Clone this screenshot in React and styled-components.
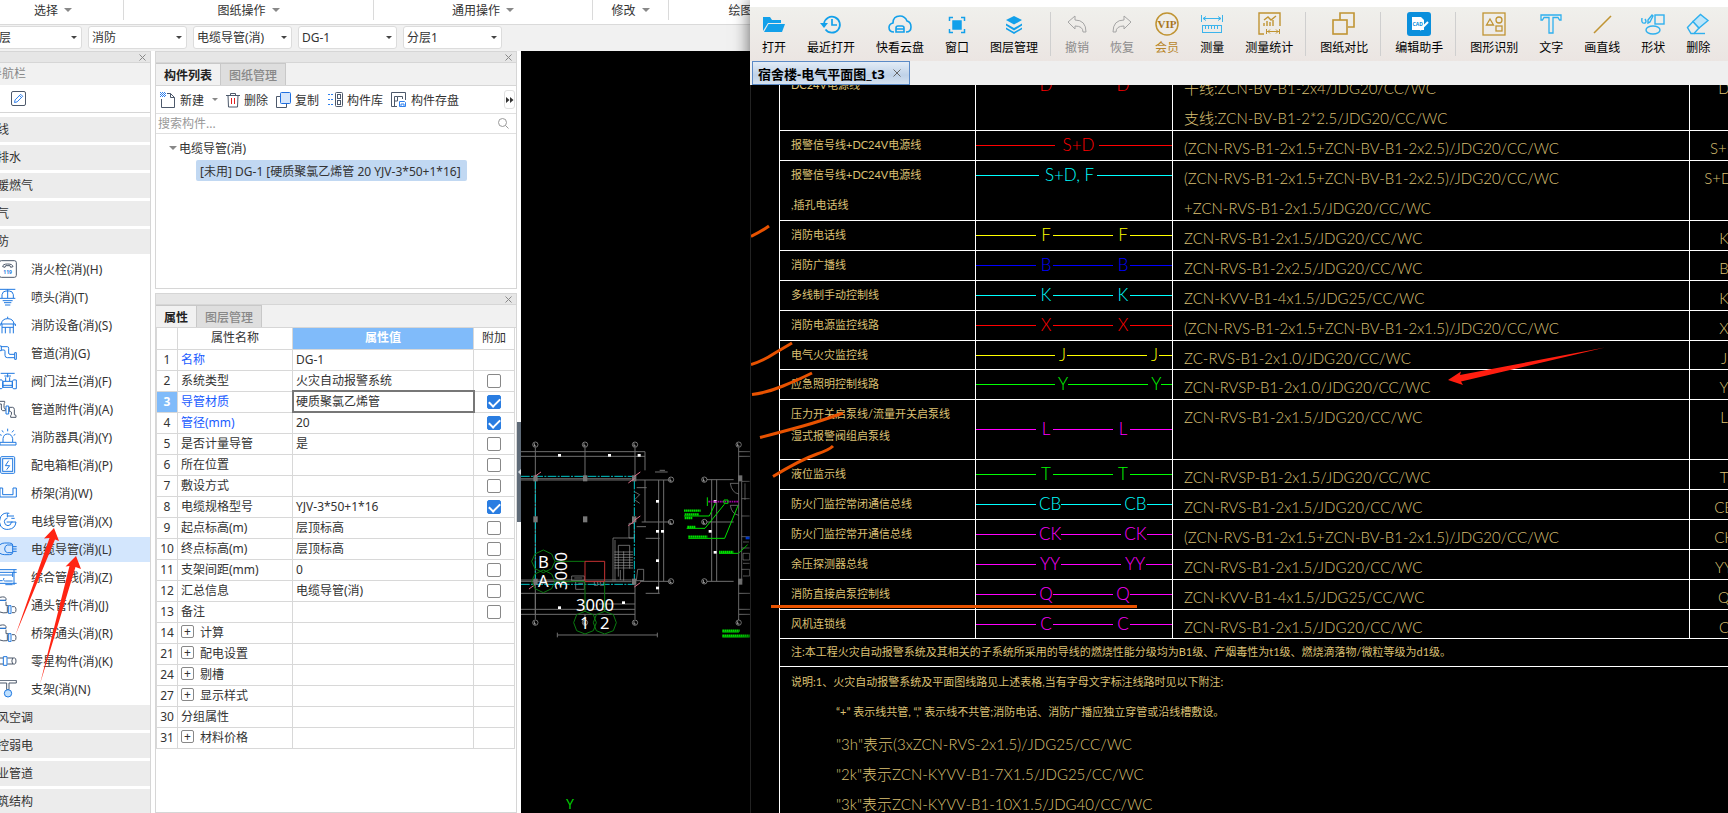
import React from 'react'
import styled, { createGlobalStyle, css } from 'styled-components'

const UI_FONT = `'Noto Sans', 'Noto Sans CJK SC', sans-serif`
const CAD_FONT = `'Lato', 'Noto Sans CJK SC', sans-serif`

const ribbonGroups = [
  { label: '选择', width: 141 },
  { label: '图纸操作', width: 250 },
  { label: '通用操作', width: 219 },
  { label: '修改', width: 76 },
  { label: '绘图', width: 158 },
]

const combos = ['首层', '消防', '电缆导管(消)', 'DG-1', '分层1']

const groupsBefore = ['轴线', '给排水', '采暖燃气', '电气', '消防']
const groupsAfter = ['通风空调', '智控弱电', '工业管道', '建筑结构']

const navItems = [
  { icon: 'hydrant', label: '消火栓(消)(H)' },
  { icon: 'sprinkler', label: '喷头(消)(T)' },
  { icon: 'device', label: '消防设备(消)(S)' },
  { icon: 'pipe', label: '管道(消)(G)' },
  { icon: 'valve', label: '阀门法兰(消)(F)' },
  { icon: 'fitting', label: '管道附件(消)(A)' },
  { icon: 'alarm', label: '消防器具(消)(Y)' },
  { icon: 'cabinet', label: '配电箱柜(消)(P)' },
  { icon: 'tray', label: '桥架(消)(W)' },
  { icon: 'wire', label: '电线导管(消)(X)' },
  { icon: 'cable', label: '电缆导管(消)(L)', active: true },
  { icon: 'bundle', label: '综合管线(消)(Z)' },
  { icon: 'elbow', label: '通头管件(消)(J)' },
  { icon: 'elbow', label: '桥架通头(消)(R)' },
  { icon: 'part', label: '零星构件(消)(K)' },
  { icon: 'bracket', label: '支架(消)(N)' },
]

const properties = [
  { id: 1, name: '名称', value: 'DG-1', key: true },
  { id: 2, name: '系统类型', value: '火灾自动报警系统', extra: false },
  { id: 3, name: '导管材质', value: '硬质聚氯乙烯管', extra: true, key: true, current: true },
  { id: 4, name: '管径(mm)', value: '20', extra: true, key: true },
  { id: 5, name: '是否计量导管', value: '是', extra: false },
  { id: 6, name: '所在位置', extra: false },
  { id: 7, name: '敷设方式', extra: false },
  { id: 8, name: '电缆规格型号', value: 'YJV-3*50+1*16', extra: true },
  { id: 9, name: '起点标高(m)', value: '层顶标高', extra: false },
  { id: 10, name: '终点标高(m)', value: '层顶标高', extra: false },
  { id: 11, name: '支架间距(mm)', value: '0', extra: false },
  { id: 12, name: '汇总信息', value: '电缆导管(消)', extra: false },
  { id: 13, name: '备注', extra: false },
  { id: 14, name: '计算', group: true },
  { id: 21, name: '配电设置', group: true },
  { id: 24, name: '剔槽', group: true },
  { id: 27, name: '显示样式', group: true },
  { id: 30, name: '分组属性' },
  { id: 31, name: '材料价格', group: true },
]

const RED = '#ff0000'
const CYAN = '#00ffff'
const YELLOW = '#ffff00'
const BLUE = '#0000ff'
const GREEN = '#00ff00'
const MAGENTA = '#ff00ff'

// lead: length of the first stroke, room: space kept for each letter mark
const cables = [
  { names: ['DC24V电源线'], mark: 'D', color: RED, bare: true, specs: ['干线:ZCN-BV-B1-2x4/JDG20/CC/WC', '支线:ZCN-BV-B1-2*2.5/JDG20/CC/WC'], code: 'D', height: 60 },
  { names: ['报警信号线+DC24V电源线'], mark: 'S+D', color: RED, lead: 79, room: 44, single: true, specs: ['(ZCN-RVS-B1-2x1.5+ZCN-BV-B1-2x2.5)/JDG20/CC/WC'], code: 'S+D' },
  { names: ['报警信号线+DC24V电源线', ',插孔电话线'], mark: 'S+D, F', color: CYAN, lead: 63, room: 58, single: true, specs: ['(ZCN-RVS-B1-2x1.5+ZCN-BV-B1-2x2.5)/JDG20/CC/WC', '+ZCN-RVS-B1-2x1.5/JDG20/CC/WC'], code: 'S+D,F', height: 60 },
  { names: ['消防电话线'], mark: 'F', color: YELLOW, specs: ['ZCN-RVS-B1-2x1.5/JDG20/CC/WC'], code: 'K' },
  { names: ['消防广播线'], mark: 'B', color: BLUE, specs: ['ZCN-RVS-B1-2x2.5/JDG20/CC/WC'], code: 'B' },
  { names: ['多线制手动控制线'], mark: 'K', color: CYAN, specs: ['ZCN-KVV-B1-4x1.5/JDG25/CC/WC'], code: 'K' },
  { names: ['消防电源监控线路'], mark: 'X', color: RED, specs: ['(ZCN-RVS-B1-2x1.5+ZCN-BV-B1-2x1.5)/JDG20/CC/WC'], code: 'X' },
  { names: ['电气火灾监控线'], mark: 'J', color: YELLOW, lead: 79, room: 12, mid: 80, specs: ['ZC-RVS-B1-2x1.0/JDG20/CC/WC'], code: 'J', height: 29 },
  { names: ['应急照明控制线路'], mark: 'Y', color: GREEN, lead: 79, room: 12, mid: 80, specs: ['ZCN-RVSP-B1-2x1.0/JDG20/CC/WC'], code: 'Y' },
  { names: ['压力开关启泵线/流量开关启泵线', '湿式报警阀组启泵线'], tight: true, mark: 'L', color: MAGENTA, specs: ['ZCN-RVS-B1-2x1.5/JDG20/CC/WC'], code: 'L', height: 60, middle: true },
  { names: ['液位监示线'], mark: 'T', color: GREEN, specs: ['ZCN-RVSP-B1-2x1.5/JDG20/CC/WC'], code: 'T' },
  { names: ['防火门监控常闭通信总线'], mark: 'CB', color: CYAN, room: 23, specs: ['ZCN-RVS-B1-2x1.5/JDG20/CC/WC'], code: 'CB' },
  { names: ['防火门监控常开通信总线'], mark: 'CK', color: MAGENTA, room: 23, specs: ['(ZCN-RVS-B1-2x1.5+ZCN-BV-B1-2x1.5)/JDG20/CC/WC'], code: 'CK' },
  { names: ['余压探测器总线'], mark: 'YY', color: MAGENTA, room: 25, specs: ['ZCN-RVS-B1-2x1.5/JDG20/CC/WC'], code: 'YY' },
  { names: ['消防直接启泵控制线'], mark: 'Q', color: MAGENTA, specs: ['ZCN-KVV-B1-4x1.5/JDG25/CC/WC'], code: 'Q' },
  { names: ['风机连锁线'], mark: 'C', color: MAGENTA, specs: ['ZCN-RVS-B1-2x1.5/JDG20/CC/WC'], code: 'C', height: 29 },
]

const cadTools = [
  { icon: 'open', label: '打开' },
  { icon: 'recent', label: '最近打开' },
  { icon: 'cloud', label: '快看云盘' },
  { icon: 'window', label: '窗口' },
  { icon: 'layers', label: '图层管理' },
  null,
  { icon: 'undo', label: '撤销', tone: '#8c8c8c' },
  { icon: 'redo', label: '恢复', tone: '#8c8c8c' },
  { icon: 'vip', label: '会员', tone: '#b8862b' },
  { icon: 'measure', label: '测量' },
  { icon: 'stats', label: '测量统计' },
  null,
  { icon: 'compare', label: '图纸对比' },
  null,
  { icon: 'helper', label: '编辑助手' },
  null,
  { icon: 'shapes', label: '图形识别' },
  { icon: 'text', label: '文字' },
  { icon: 'line', label: '画直线' },
  { icon: 'figure', label: '形状' },
  { icon: 'eraser', label: '删除' },
]

export default function App() {
  return (
    <>
      <GlobalStyle />
      <Desktop>
        <ModelWindow />
        <CadWindow />
      </Desktop>
    </>
  )
}

function ModelWindow() {
  return (
    <ModelFrame>
      <Ribbon>
        {ribbonGroups.map(({ label, width }) => (
          <RibbonButton key={label} $width={width}>
            {label}
            <Caret $size={4} />
          </RibbonButton>
        ))}
      </Ribbon>
      <ComboBar>
        {combos.map(text => (
          <Combo key={text}>
            <select aria-label={text} defaultValue={text}>
              <option>{text}</option>
            </select>
            <Caret $size={3} $dark />
          </Combo>
        ))}
      </ComboBar>
      <Workspace>
        <Navigator />
        <Middle>
          <ComponentPanel />
          <PropertyPanel />
        </Middle>
        <Gutter>
          <GutterHandle aria-label="收起">
            <svg width="4" height="8" viewBox="0 0 4 8">
              <path d="M4 1 1 4l3 3z" fill="#d8dde2" />
            </svg>
          </GutterHandle>
        </Gutter>
        <PlanView>
          <FloorPlan />
        </PlanView>
      </Workspace>
      <NavArrows viewBox="0 0 160 200" width="160" height="200">
        <path d="M54 28 59 41 55 39.500 15.500 135 49.500 38 44 38.500z" />
        <path d="M76 56 81 69 75.500 67 40 184 69.500 66 65.500 66.500z" />
      </NavArrows>
    </ModelFrame>
  )
}

function Navigator() {
  return (
    <NavPanel>
      <PanelBar>
        <CloseButton />
      </PanelBar>
      <NavTitle>导航栏</NavTitle>
      <NavTools>
        <IconButton aria-label="编辑">
          <svg width="15" height="15" viewBox="0 0 15 15" fill="none">
            <rect x=".5" y=".5" width="14" height="14" rx="1.500" stroke="#4d596b" />
            <path d="m3.500 11.500.6-2.600 5.600-5.600 2 2-5.600 5.600zM8.500 4.600l2 2" stroke="#2f80ed" />
          </svg>
        </IconButton>
      </NavTools>
      <NavList>
        {groupsBefore.map(name => (
          <NavGroup key={name}>{name}</NavGroup>
        ))}
        {navItems.map(({ icon, label, active }) => (
          <NavItem key={label} $active={active}>
            <NavIcon name={icon} />
            {label}
          </NavItem>
        ))}
        {groupsAfter.map(name => (
          <NavGroup key={name}>{name}</NavGroup>
        ))}
      </NavList>
    </NavPanel>
  )
}

function ComponentPanel() {
  return (
    <Panel>
      <PanelBar>
        <CloseButton />
      </PanelBar>
      <Tabs>
        <Tab $active>构件列表</Tab>
        <Tab>图纸管理</Tab>
      </Tabs>
      <Tools>
        <ToolButton>
          <svg width="16" height="16" viewBox="0 0 16 16" fill="none">
            <path d="M1.500 7v8.500h13V5.500l-4-4H7M10.500 1.500v4h4" stroke="#4d596b" />
            <path d="M0 .5h6M0 2.500h6M0 4.500h6" stroke="#2f80ed" strokeDasharray="1 1" />
            <path d="M1 1.500h5M1 3.500h5" stroke="#2f80ed" strokeDasharray="1 1" />
          </svg>
          新建
        </ToolButton>
        <Caret $size={3} />
        <ToolButton>
          <svg width="14" height="16" viewBox="0 0 14 16" fill="none">
            <path d="M0 3.500h14M4.500 3V1.500h5V3M2 3.500l.5 11.500h9l.5-11.500" stroke="#4d596b" />
            <path d="M5.500 6v6M8.500 6v6" stroke="#e02020" />
          </svg>
          删除
        </ToolButton>
        <ToolButton>
          <svg width="15" height="16" viewBox="0 0 15 16" fill="none">
            <path d="M4 4.500H.5v11h10V12" stroke="#4d596b" />
            <rect x="4.500" y=".5" width="10" height="11" rx="1" fill="#d6e6fb" stroke="#1f6fe0" />
          </svg>
          复制
        </ToolButton>
        <ToolButton>
          <svg width="16" height="16" viewBox="0 0 16 16" fill="none">
            <rect x="8.500" y=".5" width="7" height="14" rx="1" stroke="#4d596b" />
            <rect x="10.500" y="2.500" width="3" height="4" stroke="#4d596b" />
            <rect x="10.500" y="8.500" width="3" height="4" stroke="#4d596b" />
            <path d="M1 2.500h5M1 7.500h5M1 12.500h5" stroke="#2f80ed" strokeDasharray="2 1" />
          </svg>
          构件库
        </ToolButton>
        <ToolButton>
          <svg width="16" height="16" viewBox="0 0 16 16" fill="none">
            <path d="M6 14.500H.5V.5h14V8M3.500 14V4.500h3M6.500 4.500h5V7M3.500 9h3V4.500" stroke="#4d596b" />
            <path d="M8.500 9.500h5l1 1v4h-6zM10 14v-2h3v2" stroke="#2f80ed" />
          </svg>
          构件存盘
        </ToolButton>
        <MoreButton aria-label="更多">
          <svg width="8" height="6" viewBox="0 0 8 6" fill="#333">
            <path d="M0 0l3.500 3L0 6zM4 0l3.500 3L4 6z" />
          </svg>
        </MoreButton>
      </Tools>
      <Search>
        <input aria-label="搜索构件" placeholder="搜索构件..." />
        <svg width="11" height="11" viewBox="0 0 11 11" fill="none" stroke="#999">
          <circle cx="4.500" cy="4.500" r="4" />
          <path d="m7.500 7.500 3 3" />
        </svg>
      </Search>
      <Tree>
        <TreeNode>
          <Caret $size={4} />
          电缆导管(消)
        </TreeNode>
        <TreeLeaf>[未用] DG-1 [硬质聚氯乙烯管 20 YJV-3*50+1*16]</TreeLeaf>
      </Tree>
    </Panel>
  )
}

function PropertyPanel() {
  return (
    <Panel $grow>
      <PanelBar>
        <CloseButton />
      </PanelBar>
      <Tabs>
        <Tab $active>属性</Tab>
        <Tab>图层管理</Tab>
      </Tabs>
      <PropTable>
        <colgroup>
          <col width="21" />
          <col width="115" />
          <col />
          <col width="41" />
        </colgroup>
        <thead>
          <tr>
            <th />
            <th>属性名称</th>
            <PropHead>属性值</PropHead>
            <th>附加</th>
          </tr>
        </thead>
        <tbody>
          {properties.map(({ id, name, value, extra, key, current, group }) => (
            <tr key={id}>
              <PropIndex $current={current}>{id}</PropIndex>
              <PropName $key={key}>
                {group && <Expander aria-label={`展开${name}`}>+</Expander>}
                {name}
              </PropName>
              <PropValue $current={current}>{value}</PropValue>
              <PropCheck>
                {extra !== undefined && (
                  <input type="checkbox" aria-label={name} defaultChecked={extra} />
                )}
              </PropCheck>
            </tr>
          ))}
        </tbody>
      </PropTable>
    </Panel>
  )
}

function CloseButton() {
  return (
    <IconButton aria-label="关闭">
      <svg width="7" height="7" viewBox="0 0 7 7" stroke="#888">
        <path d="m.5.5 6 6m0-6-6 6" />
      </svg>
    </IconButton>
  )
}

function CadWindow() {
  return (
    <CadFrame>
      <CadToolbar>
        {cadTools.map((tool, index) =>
          tool ? (
            <CadTool key={tool.label} $tone={tool.tone}>
              <CadIcon name={tool.icon} />
              {tool.label}
            </CadTool>
          ) : (
            <CadDivider key={index} />
          )
        )}
      </CadToolbar>
      <FileTabs>
        <FileTab>
          <span>宿舍楼-电气平面图_t3</span>
          <IconButton aria-label="关闭">
            <svg width="8" height="8" viewBox="0 0 8 8" stroke="#666">
              <path d="m.5.5 7 7m0-7-7 7" />
            </svg>
          </IconButton>
        </FileTab>
      </FileTabs>
      <Drawing>
        <CableTable>
          <colgroup>
            <col width="196" />
            <col width="197" />
            <col />
            <col width="69" />
          </colgroup>
          <tbody>
            {cables.map((cable, index) => (
              <CableRow key={index} $height={cable.height}>
                <CableName $tight={cable.tight}>
                  {cable.names.map(line => (
                    <p key={line}>{line}</p>
                  ))}
                </CableName>
                <MarkCell $middle={cable.middle}>
                  <CableMark {...cable} />
                </MarkCell>
                <CableSpec>
                  {cable.specs.map(line => (
                    <p key={line}>{line}</p>
                  ))}
                </CableSpec>
                <CableCode>{cable.code}</CableCode>
              </CableRow>
            ))}
            <CableRow $height={28}>
              <NoteCell colSpan="4">
                注:本工程火灾自动报警系统及其相关的子系统所采用的导线的燃烧性能分级均为B1级、产烟毒性为t1级、燃烧滴落物/微粒等级为d1级。
              </NoteCell>
            </CableRow>
            <tr>
              <NotesCell colSpan="4">
                <p>说明:1、火灾自动报警系统及平面图线路见上述表格,当有字母文字标注线路时见以下附注:</p>
                <Indented>“+” 表示线共管, “,” 表示线不共管;消防电话、消防广播应独立穿管或沿线槽敷设。</Indented>
                <CodeNotes>
                  <Indented>"3h"表示(3xZCN-RVS-2x1.5)/JDG25/CC/WC</Indented>
                  <Indented>"2k"表示ZCN-KYVV-B1-7X1.5/JDG25/CC/WC</Indented>
                  <Indented>"3k"表示ZCN-KYVV-B1-10X1.5/JDG40/CC/WC</Indented>
                </CodeNotes>
              </NotesCell>
            </tr>
          </tbody>
        </CableTable>
        <Markup width="978" height="728" viewBox="751 85 978 728" fill="none">
          <g stroke="#e85200" strokeWidth="3">
            <path d="M751 236.500 Q762 231 769 226" />
            <path d="M751 364.500 Q763 361 775 353 L792 343" />
            <path d="M752 394.500 Q766 393 783 386 T812 373" />
            <path d="M760 437.500 Q785 431 803 426 T843 413" />
            <path d="M773 476.500 Q800 460 817 454 Q829 450 833 446" />
            <path d="M771 606.500 H1137" />
          </g>
          <path d="M1448 380 1461 371.500 1460 375 1605 347.500 1461 381.500 1463 385z" fill="#ff1e10" />
        </Markup>
      </Drawing>
    </CadFrame>
  )
}

function CableMark({ mark, color, lead = 60, room = 17, mid = 60, single, bare }) {
  return (
    <MarkLine $color={color} $bare={bare}>
      <Stroke $length={lead} />
      <Letter $room={room}>{mark}</Letter>
      {!single && <Stroke $length={mid} />}
      {!single && <Letter $room={room}>{mark}</Letter>}
      <Stroke />
    </MarkLine>
  )
}

function NavIcon({ name }) {
  const b = '#1f78e0'
  const d = '#4d596b'
  const drawings = {
    hydrant: (
      <g stroke={d}>
        <rect x="-2" y="2" width="51" height="50" rx="6" />
        <path d="M8 20q0-8 15-8t16 8l-7 2-2-5H17l-2 5z" />
        <text x="10" y="43" fontSize="15" fontWeight="700" fill={b} stroke="none">119</text>
      </g>
    ),
    sprinkler: <path stroke={b} d="M0 4h46M23 4v26M6 30V20Q8 9 18 9h10q10 0 12 11v10M0 31h46M8 38h30M12 44h22M15 51h16" />,
    device: <path stroke={b} d="M23 2v6M4 24Q6 8 23 8t19 16M0 24h46M6 24v28M40 24v28M16 34v18M30 34v18M6 34h34M0 30v-6M46 30v-6" />,
    pipe: <path stroke={b} d="M0 6h4v14H0M4 8h18q4 0 4 5v14q0 4 4 4h14M4 18h8q3 0 3 4v12q0 7 7 7h22M44 26h5v20h-5z" />,
    valve: <path stroke={b} d="M2 4h42M23 4v12M13 12h20M17 16v12M29 16v12M9 28h28v18H9zM-2 24q9-3 10 4v18q-1 6-10 4M49 24q-11-3-12 4v18q1 7 12 4zM9 40h28" />,
    fitting: (
      <>
        <path stroke={d} d="M0 4h14v4q-2 2-2 8v6q0 4 4 4v6H8q-4 0-4-8V12H0M28 22h10q4 0 5 6v16l5 2v6H32v-5q4-3 2-11-1-2-6-2z" />
        <path stroke={b} d="M18 18h8v24h-8z" />
      </>
    ),
    alarm: <path stroke={b} d="M23 2v8M6 7l4 6M41 7l-5 6M0 20l5 2M46 19l-5 3M9 42V32q2-14 14-14t15 14v10M0 43h48v8H0z" />,
    cabinet: (
      <g stroke={b}>
        <rect x="2" y="2" width="42" height="50" rx="3" />
        <rect x="8" y="8" width="30" height="38" />
        <path d="M26 14 16 29h13L20 41" />
      </g>
    ),
    tray: <path stroke={b} d="M0 12h8v20h31V12h10v27H0z" />,
    wire: <path stroke={b} d="M28 4Q10 0 2 14-6 30 2 42q8 12 24 10 20-2 22-22H34q0 10-10 11-10 0-11-12 0-9 9-10M22 4v12M22 12h20M34 19h10M20 30h18" />,
    cable: <path stroke={b} d="M0 14q6-5 14-5h14q10 0 10 6M0 40q6 4 14 4h14q10 0 10-6M38 15H22q-8 2-8 12 0 9 8 11h16zM38 20h12M38 27h12M38 34h12" />,
    bundle: <path stroke={b} d="M0 5h50M0 13h50M0 21h38M12 30q-4 9 4 9h22M0 38h8M0 46h50M16 50h22M38 13v14M42 5v46" />,
    elbow: (
      <>
        <path stroke={d} d="M0 4q16-4 18 4v5H0M18 17v12h8M0 48q8 4 22 2V31M36 32h8q4 2 4 9t-4 9h-8" />
        <path stroke={b} d="M0 13h18M26 29h7v24h-7z" />
      </>
    ),
    part: (
      <>
        <path stroke={d} d="M0 18h10M0 36h10M22 18h22q4 0 4 9t-4 9H22M38 18q-5 9 0 18" />
        <path stroke={b} d="M10 14h11v26H10z" />
      </>
    ),
    bracket: (
      <>
        <path stroke={d} d="M-2 1h51v8H27v20h-7V9H-2z" />
        <circle cx="24" cy="40" r="11" fill="#bfe0ff" stroke={b} />
      </>
    ),
  }
  return (
    <svg width="18" height="18" viewBox="0 0 54 54" fill="none" strokeWidth="3">
      {drawings[name]}
    </svg>
  )
}

function CadIcon({ name }) {
  const blue = '#12a0ea'
  const gold = '#c09433'
  const drawings = {
    open: (
      <g fill={blue}>
        <path d="M1 19V5h7l2 3h9v3H6z" />
        <path d="M6.500 12H23l-3 8H2z" />
      </g>
    ),
    recent: (
      <>
        <path d="M5 11.500a8 8 0 1 1 1.500 6M13 7v6h5" stroke={blue} strokeWidth="1.700" />
        <path d="M1 11h8l-4 5z" fill={blue} />
      </>
    ),
    cloud: (
      <g stroke={blue} strokeWidth="1.600">
        <path d="M6 20q-5 0-5-4.500Q1 12 5 11 5 4 12 4q5 0 7 5 4 1 4 6t-5 5" />
        <path d="M8 20v-4q0-2 2-2h4q2 0 2 2v4zM8 17h8" />
      </g>
    ),
    window: (
      <g stroke={blue} strokeWidth="1.500">
        <path d="M4.500 9V5.500H8M16 5.500h3.500V9M19.500 17v3.500H16M8 20.500H4.500V17" />
        <rect x="8" y="9" width="8" height="8" fill={blue} />
      </g>
    ),
    layers: (
      <g fill={blue}>
        <path d="m12 4 8 4-8 4.500L4 8z" />
        <path d="M4 11.500 12 16l8-4.500v2L12 18.500l-8-5z" />
        <path d="M4 15.500 12 20l8-4.500v1.700L12 22l-8-4.800z" />
      </g>
    ),
    undo: <path d="m3 10 7-6v4q11 0 11 12h-3q0-6-8-6v3z" stroke="#a5a5a5" />,
    redo: <path d="m21 10-7-6v4Q3 8 3 20h3q0-6 8-6v3z" stroke="#a5a5a5" />,
    vip: (
      <>
        <circle cx="12" cy="12" r="11" stroke={gold} strokeWidth="1.500" />
        <text x="12" y="16" textAnchor="middle" fontSize="11" fontWeight="700" fontFamily="Liberation Serif" fill="#a8751c">VIP</text>
      </>
    ),
    measure: (
      <g stroke="#3cb4ec">
        <path d="M1.500 3v7M22.500 3v7M3 6.500h18M6 4.500l-3 2 3 2M18 4.500l3 2-3 2" />
        <rect x="2.500" y="13.500" width="19" height="7" />
        <path d="M5.500 14v3M8.500 14v3M11.500 14v3M14.500 14v3M17.500 14v3" />
      </g>
    ),
    stats: (
      <g stroke={gold} strokeWidth="1.400">
        <path d="M7 22H2V1h21v13M7 8l4-3 3 3 5-4" />
        <path d="M7 14v-3M10 14V9M13 14v-4M16 14V8" />
        <path d="M9.500 17v5M22.500 17v5M10 19.500h12M13 17.500l-2 2 2 2M19 17.500l2 2-2 2" strokeWidth="1" />
      </g>
    ),
    compare: (
      <g stroke={gold} strokeWidth="1.600">
        <path d="M8 8V1h14v14h-6" />
        <rect x="1" y="8" width="14" height="14" />
      </g>
    ),
    helper: (
      <>
        <rect width="24" height="24" rx="3" fill="#0a8fdc" />
        <path d="M5 5h9l3 3v10H5z" fill="#fff" />
        <text x="5.500" y="14" fontSize="5" fontWeight="700" fill="#0a8fdc">CAD</text>
        <path d="m13 18 8-8" stroke="#fff" strokeWidth="2" />
      </>
    ),
    shapes: (
      <g stroke={gold} strokeWidth="1.300">
        <rect x="1" y="1" width="22" height="22" />
        <path d="m8 7 3.500 6h-7z" />
        <circle cx="17" cy="8" r="3" />
        <rect x="14" y="14" width="6" height="5" />
      </g>
    ),
    text: <path d="M2 3h20v5h-1.500L19 5.500h-5V21h-4V5.500H5L3.500 8H2z" stroke="#2fb0ee" strokeWidth="1.300" />,
    line: <path d="M4 21 21 4" stroke={gold} strokeWidth="1.600" />,
    figure: (
      <g stroke="#2fb0ee" strokeWidth="1.400">
        <path d="M1 6q-1 6 3 5 2-1 0-4M7 8l4-5 1 1-3 6-2 1z" />
        <rect x="14" y="3" width="9" height="9" />
        <ellipse cx="12" cy="18" rx="7" ry="4" />
      </g>
    ),
    eraser: (
      <g stroke="#2fb0ee" strokeWidth="1.400">
        <path d="m1.500 15.500 5.500-6 6 6.500-5 5.500H5z" />
        <path d="m7 9.500 7.500-7 7.500 6-9 7.500z" fill="#bfe5f8" />
        <path d="M8 21.500h11" />
      </g>
    ),
  }
  return (
    <svg width="24" height="24" viewBox="0 0 24 24" fill="none">
      {drawings[name]}
    </svg>
  )
}

// The plan is drawn on a grid three times finer than the screen.
function FloorPlan() {
  const bubbles = [[61, 74], [210, 74], [360, 74], [468, 179], [468, 306], [468, 484], [61, 608], [210, 608], [360, 608], [568, 179], [568, 306], [568, 484], [671, 74], [671, 608]]
  const dimensions = [[133, 106], [283, 106], [372, 106], [133, 563], [325, 548], [427, 244], [427, 334], [442, 334], [427, 422], [427, 504], [600, 244], [585, 334], [600, 397]]
  const columns = [[61, 175], [210, 175], [357, 175], [61, 298], [210, 298], [357, 298], [61, 485], [357, 485], [675, 175], [675, 485]]
  const ticks = [[68, 162], [366, 162], [366, 294], [348, 310], [50, 500], [366, 494], [348, 182]]
  return (
    <svg width="100%" height="100%" viewBox="521 51 229 762" preserveAspectRatio="xMinYMin slice" fill="none">
      <g transform="translate(515 420) scale(.33333)" strokeWidth="3">
        <g stroke="#6f6f6f">
          <path d="M18 95H390M18 109H390M390 95v56M61 84v500M210 84v84M360 84v92M18 520H360M18 568H360M18 583H360M61 520v78M360 490v108M210 583v16" />
          <path d="M18 180H350M18 484H150M62 485H350M360 180h100M431 180v340M446 180v304M380 306h80M392 355h42M375 484h85M392 520h42M390 180v126" />
          <path d="M576 179h80M576 306h80M576 484h80M590 179v305M605 179v305M671 84v84M671 170v430M671 95h34M671 109h34M671 520h34M671 568h34M671 583h34" />
          <path d="M127 645h300M127 638v14M427 638v14M252 552h108M420 156h38M434 151h16M365 203h30M365 320h28" />
        </g>
        <g stroke="#9a9a9a" strokeWidth="2">
          <path d="M18 176H350M18 480H350M294 482V354h64M300 482V360M310 470v-94h34v70M342 310h16v44h-16zM360 216l14 8-14 14M360 240l14 10M368 448h18v34h-22z" />
          <path d="M298 396h56M298 404h56M298 412h56M298 420h56M298 428h56M298 436h56M298 444h56M326 394v88M316 450v30" />
          <path d="M170 468h38v14h-38zM178 474h24M182 484v24h26v-24M190 490h14M238 484v12h10v-12M256 484v12h10v-12" />
          <path d="M671 190h-25q4 28 25 32M671 256h-25q4 26 25 30M680 184h24M680 184v300M690 190v50M680 236h24M680 288h24M680 350h24M684 366h18M680 384h24M684 400h20v20h-20zM684 430h20M680 448h24v20h-20" />
        </g>
        <path d="M18 169H358M61 182V484M358 182V484M18 493H358" stroke="#00c8cc" strokeDasharray="26 4 6 4" />
        {columns.map(([x, y]) => (
          <rect key={`${x}-${y}`} x={x - 6} y={y - 9} width="13" height="18" fill="#777" />
        ))}
        {bubbles.map(([x, y]) => (
          <g key={`${x}-${y}`}>
            <circle cx={x} cy={y} r="8" stroke="#b0b0b0" strokeWidth="2" />
            <path d={`M${x - 3} ${y - 4}v8h5`} stroke="#eee" strokeWidth="2" />
          </g>
        ))}
        {dimensions.map(([x, y]) => (
          <rect key={`${x}-${y}`} x={x - 4} y={y - 4} width="9" height="8" fill="#fff" />
        ))}
        {ticks.map(([x, y]) => (
          <path key={`${x}-${y}`} d={`M${x - 8} ${y + 7}l18-13`} stroke="#e0708a" />
        ))}
        <path d="M580 245h92" stroke="#a000a0" strokeWidth="5" strokeDasharray="5 2" />
        <g stroke="#00e000">
          <path d="M507 272h50M509 283h43M509 294h24M517 321h25M520 350h57M612 396h43M622 632h52M622 647h82" strokeWidth="7" strokeDasharray="5 1" />
          <path d="M507 288h76l18-38M515 325h55l58-72M520 355h109l40-98M612 400h58l28-26M577 232v26M622 636h50M622 651h82" />
          <path d="M627 240h12v10h-12z" />
        </g>
        <path d="M692 350h12v8h-12z" fill="#0048ff" />
        <g stroke="#0a7a10">
          <path d="M50 424 60 402l25-12 25 12 10 22-10 22-25 12-25-12zM50 484l10-22 25-12 25 12 10 22-10 22-25 12-25-12z" />
          <path d="M176 608l9-24 25-10 25 10 9 24-9 24-25 10-25-10zM235 608l9-24 25-10 26 10 9 24-9 24-26 10-25-10z" />
          <path d="M120 424h90M120 484h90M210 484v90M269 484v90" />
        </g>
        <path d="M210 424h59v60h-59z" stroke="#c83232" />
        <g fill="#fff" fontFamily="Noto Sans" fontSize="50" textAnchor="middle">
          <text x="85" y="443">B</text>
          <text x="85" y="502">A</text>
          <text x="209" y="627">1</text>
          <text x="269" y="627">2</text>
          <text x="240" y="574">3000</text>
          <text transform="translate(155 453) rotate(-90)">3000</text>
        </g>
        <text x="165" y="1168" fill="#00d000" fontFamily="Lato" fontSize="38" textAnchor="middle">Y</text>
      </g>
    </svg>
  )
}

const GlobalStyle = createGlobalStyle`
  * {
    box-sizing: border-box;
  }

  body {
    margin: 0;
    overflow: hidden;
    background: #fff;
    color: #333;
    font-family: ${UI_FONT};
    font-size: 12px;
  }

  button, input, select {
    font: inherit;
    color: inherit;
  }

  button {
    margin: 0;
    padding: 0;
    border: 0;
    background: none;
    white-space: nowrap;
  }

  p {
    margin: 0;
  }
`

const Desktop = styled.div`
  display: flex;
  height: 100vh;
  overflow: hidden;
`

const ModelFrame = styled.main`
  position: relative;
  display: flex;
  flex: 0 0 767px;
  flex-direction: column;
  margin-left: -17px;
  overflow: hidden;
`

const Ribbon = styled.header`
  display: flex;
  flex-shrink: 0;
  height: 25px;
  border-bottom: 1px solid #dadada;
`

const RibbonButton = styled.button`
  display: flex;
  flex: 0 0 ${({ $width }) => $width}px;
  align-items: center;
  justify-content: center;
  gap: 6px;
  height: 20px;
  border-right: 1px solid #dadada;
`

const Caret = styled.i`
  flex-shrink: 0;
  border: ${({ $size }) => $size}px solid transparent;
  border-top-color: ${({ $dark }) => ($dark ? '#444' : '#888')};
  border-bottom-width: 0;
`

const ComboBar = styled.div`
  display: flex;
  flex-shrink: 0;
  gap: 6px;
  height: 26px;
  padding: 1px 0 2px;
  background: #f1f1f1;
`

const Combo = styled.label`
  display: flex;
  align-items: center;
  width: 99px;
  padding-right: 4px;
  border: 1px solid #dcdcdc;
  border-radius: 3px;
  background: #fff;

  select {
    flex: 1;
    min-width: 0;
    padding: 0 0 0 3px;
    border: 0;
    background: none;
    appearance: none;
  }
`

const Workspace = styled.div`
  display: flex;
  flex: 1;
  min-height: 0;
`

const NavPanel = styled.nav`
  display: flex;
  flex: 0 0 168px;
  flex-direction: column;
  margin-right: 4px;
  border-right: 1px solid #d6d6d6;
`

const PanelBar = styled.div`
  display: flex;
  flex-shrink: 0;
  align-items: center;
  justify-content: flex-end;
  height: 12px;
  padding-right: 4px;
  border: solid #d6d6d6;
  border-width: 1px 0;
  background: #e6e6e6;
`

const IconButton = styled.button`
  display: flex;
`

const NavTitle = styled.h2`
  flex-shrink: 0;
  height: 22px;
  margin: 0;
  padding-left: 7px;
  background: #f1f1f1;
  color: #888;
  font-size: 12px;
  font-weight: normal;
  line-height: 22px;
`

const NavTools = styled.div`
  display: flex;
  flex-shrink: 0;
  align-items: center;
  height: 28px;
  padding-left: 28px;
  border-bottom: 1px solid #d6d6d6;
`

const NavList = styled.div`
  display: flex;
  flex-direction: column;
  gap: 3px;
  padding-top: 4px;
`

const NavGroup = styled.button`
  flex-shrink: 0;
  height: 25px;
  padding: 0 0 2px 2px;
  background: #ececec;
  text-align: left;
`

const NavItem = styled.button`
  display: flex;
  flex-shrink: 0;
  align-items: center;
  gap: 13px;
  height: 25px;
  padding: 0 0 2px 17px;
  background: ${({ $active }) => ($active ? '#d3e6fd' : 'none')};
`

const Middle = styled.div`
  display: flex;
  flex: 0 0 362px;
  flex-direction: column;
  gap: 4px;
`

const Panel = styled.section`
  display: flex;
  flex: ${({ $grow }) => ($grow ? '1' : '0 0 238px')};
  flex-direction: column;
  border: 1px solid #d6d6d6;
  border-top: 0;
`

const Tabs = styled.div`
  display: flex;
  flex-shrink: 0;
  height: 23px;
  border-bottom: 1px solid #d6d6d6;
  background: #f1f1f1;
`

const Tab = styled.button`
  padding: 0 8px;
  border: 1px solid #c8c8c8;
  border-width: 1px 1px 0 0;
  background: ${({ $active }) => ($active ? '#f1f1f1' : '#dedede')};
  color: ${({ $active }) => ($active ? '#222' : '#888')};
  font-weight: ${({ $active }) => ($active ? 700 : 500)};
`

const Tools = styled.div`
  display: flex;
  flex-shrink: 0;
  align-items: center;
  gap: 8px;
  height: 28px;
  padding: 0 1px 0 4px;
  border-bottom: 1px solid #e0e0e0;
`

const ToolButton = styled.button`
  display: flex;
  align-items: center;
  gap: 4px;
`

const MoreButton = styled.button`
  display: flex;
  align-items: center;
  justify-content: center;
  width: 11px;
  height: 19px;
  margin-left: auto;
  border: 1px solid #e0e0e0;
  border-radius: 3px;
`

const Search = styled.div`
  display: flex;
  flex-shrink: 0;
  align-items: center;
  height: 20px;
  padding-right: 7px;
  border-bottom: 1px solid #e0e0e0;

  input {
    flex: 1;
    padding: 0 2px;
    border: 0;
    outline: 0;
  }

  input::placeholder {
    color: #999;
  }
`

const Tree = styled.div`
  display: flex;
  flex-direction: column;
  align-items: flex-start;
  padding: 4px 0 0 13px;
`

const TreeNode = styled.button`
  display: flex;
  align-items: center;
  gap: 2px;
  height: 20px;
`

const TreeLeaf = styled.button`
  height: 21px;
  margin: 2px 0 0 27px;
  padding: 0 6px 0 4px;
  border-radius: 2px;
  background: #c1d8f2;
`

const PropTable = styled.table`
  width: calc(100% - 1px);
  border-collapse: collapse;
  table-layout: fixed;

  tr {
    height: 21px;
  }

  th,
  td {
    height: 21px;
    padding: 0 3px;
    border: 1px solid #d8d8d8;
    font-weight: normal;
    line-height: 16px;
    text-align: left;
    white-space: nowrap;
  }

  thead th {
    border-top: 0;
    text-align: center;
  }
`

const PropHead = styled.th`
  && {
    background: #80bbfa;
    color: #fff;
    font-weight: 700;
  }
`

const PropIndex = styled.th`
  && {
    padding: 0;
    text-align: center;
    ${({ $current }) =>
      $current &&
      css`
        background: #80bbfa;
        color: #fff;
        font-weight: 700;
      `}
  }
`

const PropName = styled.td`
  color: ${({ $key }) => ($key ? '#1a5cff' : '#333')};
`

const PropValue = styled.td`
  ${({ $current }) =>
    $current &&
    css`
      outline: 2px solid #777;
      outline-offset: -1px;
    `}
`

const PropCheck = styled.td`
  && {
    padding: 0;
    text-align: center;
  }

  input {
    display: inline-flex;
    justify-content: center;
    width: 14px;
    height: 14px;
    margin: 0;
    border: 1px solid #888;
    border-radius: 2px;
    background: #fff;
    appearance: none;
    vertical-align: middle;
  }

  input:checked {
    border-color: #2a7de1;
    background: #2a7de1;
  }

  input:checked::after {
    width: 5px;
    height: 9px;
    border: solid #fff;
    border-width: 0 2px 2px 0;
    content: '';
    transform: rotate(45deg);
  }
`

const Expander = styled.button`
  width: 13px;
  height: 13px;
  margin-right: 6px;
  border: 1px solid #888;
  border-radius: 2px;
  line-height: 10px;
  vertical-align: 1px;
`

const Gutter = styled.div`
  display: flex;
  flex: 0 0 4px;
  align-items: center;
  padding-top: 80px;
`

const GutterHandle = styled.button`
  display: flex;
  align-items: center;
  width: 4px;
  height: 100px;
  background: #5f6b78;
`

const PlanView = styled.div`
  display: flex;
  flex: 1;
  min-width: 0;
  background: #000;
`

const NavArrows = styled.svg`
  position: absolute;
  top: 500px;
  left: 17px;
  fill: #ff2413;
  pointer-events: none;
`

const CadFrame = styled.main`
  z-index: 1;
  display: flex;
  flex: 1;
  flex-direction: column;
  min-width: 0;
  border-top: 7px solid #fff;
  box-shadow: 0 0 16px rgba(0, 0, 0, 0.6);
  background: #efefef;
`

const CadToolbar = styled.header`
  display: flex;
  flex-shrink: 0;
  height: 54px;
  padding: 5px 0 0 1px;
  background: linear-gradient(#f0f0ec, #ebe5e2);
`

const CadTool = styled.button`
  display: flex;
  flex-direction: column;
  align-items: center;
  gap: 3px;
  padding: 0 10px 0 11px;
  color: ${({ $tone }) => $tone || '#000'};
  line-height: 18px;

  svg {
    flex-shrink: 0;
  }
`

const CadDivider = styled.div`
  flex: 0 0 2px;
  height: 44px;
  margin: 0 2px;
  border-left: 1px solid #cfcfcf;
`

const FileTabs = styled.div`
  display: flex;
  flex-shrink: 0;
  height: 24px;
  padding-left: 2px;
`

const FileTab = styled.div`
  display: flex;
  align-items: center;
  gap: 7px;
  width: 158px;
  padding-left: 5px;
  border: 1px solid #5b8ac6;
  background: linear-gradient(#e3ecf6, #bfd2e8 60%, #d5e2f0);
  color: #000;
  font-size: 13px;
  font-weight: 700;

  span {
    width: 128px;
    overflow: hidden;
    white-space: nowrap;
  }
`

const Drawing = styled.div`
  position: relative;
  flex: 1;
  min-height: 0;
  overflow: hidden;
  border-left: 1px solid #222;
  background: #000;
  color: #dcc074;
  font-family: ${CAD_FONT};
  font-size: 11px;
`

const CableTable = styled.table`
  width: calc(100% + 3px);
  margin: -15px 0 0 28px;
  border-collapse: collapse;
  table-layout: fixed;

  td {
    padding: 0 11px;
    border: 1px solid #fff;
    vertical-align: top;
    white-space: nowrap;
  }
`

const CableRow = styled.tr`
  height: ${({ $height = 30 }) => $height}px;
`

const CableName = styled.td`
  line-height: 22px;

  && {
    padding-top: 3px;
  }

  p + p {
    margin-top: ${({ $tight }) => ($tight ? 0 : 8)}px;
  }
`

const MarkCell = styled.td`
  && {
    padding: ${({ $middle }) => ($middle ? 19 : 4)}px 0 0;
  }
`

const MarkLine = styled.div`
  display: flex;
  align-items: center;
  height: 20px;
  color: ${({ $color }) => $color};

  i {
    visibility: ${({ $bare }) => ($bare ? 'hidden' : 'visible')};
  }
`

const Stroke = styled.i`
  flex: ${({ $length }) => ($length ? `0 0 ${$length}px` : '1')};
  height: 1px;
  background: currentColor;
`

const Letter = styled.span`
  display: flex;
  flex: 0 0 ${({ $room }) => $room}px;
  justify-content: center;
  padding-left: 3px;
  font-size: 17px;
  font-weight: 300;
  line-height: 20px;
`

const CableSpec = styled.td`
  font-size: 15px;
  font-weight: 300;
  line-height: 22px;

  && {
    padding-top: 6px;
  }

  p + p {
    margin-top: 8px;
  }
`

const CableCode = styled(CableSpec)`
  text-align: center;
`

const NoteCell = styled.td`
  line-height: 26px;
`

const NotesCell = styled.td`
  line-height: 30px;
`

const Indented = styled.p`
  padding-left: 45px;
`

const CodeNotes = styled.div`
  margin-top: 2px;
  font-size: 15px;
  font-weight: 300;
`

const Markup = styled.svg`
  position: absolute;
  top: 0;
  left: 0;
  pointer-events: none;
`
